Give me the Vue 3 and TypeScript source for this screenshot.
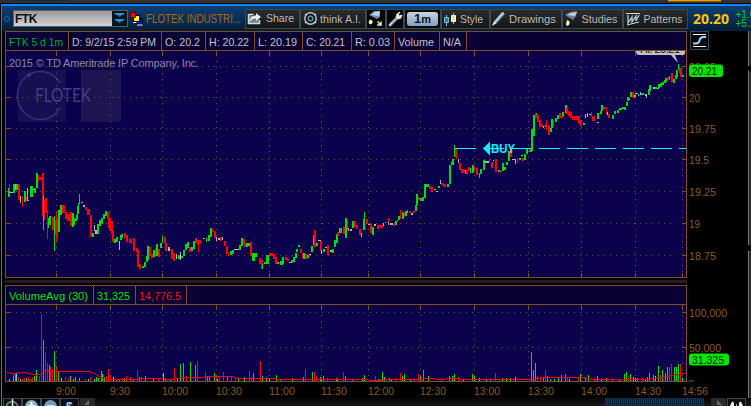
<script setup lang="ts">
interface Box { x: number; y: number; w: number; h: number; c: string }

const palette: Record<string, string> = { g: '#00dc00', r: '#ff0000', w: '#b4b4b4', c: '#22e6f0' }

// Each candle: colour, x, high, low, width
const candleData = `g8 188 197 2,r9 184 191 1,w10 192 193 3,g13 184 193 2,w15 184 190 1,g16 184 190 2,r18 184 200 2,w20 196 203 1,r22 196 207 1,g24 191 202 2,r26 197 201 1,w27 188 201 1,w28 200 201 1,g30 186 197 3,w33 189 190 1,g34 188 193 2,g36 173 188 2,r38 175 181 1,r39 177 180 3,
r42 173 216 2,g43 196 230 1,r44 200 220 1,r45 198 213 2,r47 210 239 1,g48 218 228 1,g49 216 225 2,r52 217 230 2,g54 216 251 1,r55 220 234 1,r56 211 242 1,r57 218 238 1,g58 210 232 2,g60 205 215 2,r62 205 213 3,r65 212 219 2,r67 214 221 3,r70 212 226 2,g72 213 227 2,g74 218 225 1,g75 219 221 1,g76 215 221 1,g77 206 219 1,g78 203 214 1,g79 194 204 1,w81 202 203 2,w83 205 207 2,r85 207 210 2,r87 209 215 3,r90 215 237 2,g92 233 237 2,w94 225 231 1,w95 230 234 2,g97 224 234 2,g99 220 226 2,g101 218 224 2,g103 214 219 2,g105 211 216 2,r107 212 219 2,r108 213 228 1,r109 218 231 2,r111 221 234 2,r112 230 242 2,g114 239 243 2,g116 237 242 2,w119 241 250 1,g120 235 240 2,g121 234 238 2,r124 233 238 2,r126 235 242 2,r129 239 243 2,r131 238 244 1,r133 238 251 2,r136 248 252 2,
r137 250 267 2,r139 264 269 2,g142 266 268 2,g144 262 267 2,g146 256 262 2,g147 246 260 2,r149 247 256 2,r151 254 258 2,g153 250 257 2,r155 248 256 1,g156 244 256 2,r158 249 257 2,g160 243 248 2,g162 236 243 1,r164 237 243 2,r165 243 251 2,w168 247 251 2,r171 249 259 2,r173 253 261 2,w176 254 259 1,g178 255 259 2,w180 252 260 1,g181 256 258 2,g183 250 256 2,g185 244 250 2,g187 242 248 2,r189 247 252 2,g191 247 251 2,g193 241 249 2,r195 238 243 2,r197 240 244 4,r198 242 252 1,w203 238 239 2,g206 238 242 1,g208 235 241 2,g210 228 237 2,r212 229 232 1,r214 231 238 2,w216 237 241 1,w218 238 240 2,r220 237 241 2,w222 237 240 1,r224 241 246 2,r226 246 254 2,r228 252 256 1,g230 251 255 2,g232 250 254 2,w234 249 250 5,g239 245 250 2,g241 238 246 2,r243 239 244 2,r244 243 247 2,g246 243 247 2,g248 243 246 2,
r250 242 256 2,g252 253 261 3,g255 253 257 2,r257 254 257 1,r259 258 264 2,r261 260 269 2,g262 264 269 1,g264 262 264 3,g266 255 264 3,r269 253 256 4,r273 254 259 2,r275 257 264 2,g277 262 264 2,g280 261 265 3,g282 257 264 2,r285 257 260 2,r287 259 261 2,w289 262 263 2,g291 260 263 2,g293 257 262 2,g295 253 258 2,g296 249 252 2,g298 245 247 2,r300 249 253 2,r302 253 258 2,g303 253 259 2,r305 254 259 2,g307 255 258 2,w309 254 255 2,g311 246 252 2,g313 235 245 2,r314 230 247 2,g316 243 246 2,w318 240 241 3,r320 241 251 2,w321 250 254 1,g323 249 252 2,w325 247 248 2,r327 245 255 2,w330 250 252 2,g332 249 253 2,g334 240 247 2,g336 234 243 2,r337 232 236 2,g339 228 233 3,r343 227 234 2,g345 218 238 2,r347 221 230 1,w348 228 231 1,w350 229 231 2,g352 221 228 2,r354 221 227 2,r356 225 229 2,r359 229 235 2,w361 233 237 1,g363 219 230 2,g364 212 224 1,r366 219 224 2,w368 224 225 3,r370 224 233 2,g372 227 235 2,w374 224 226 2,r377 225 229 2,r379 225 228 4,w383 223 226 1,w385 222 223 1,w388 218 225 1,r388 218 222 1,w390 223 225 3,r393 224 226 2,g395 221 225 2,w397 220 221 1,g398 216 220 2,r400 210 219 1,g402 212 219 2,r404 213 217 1,g405 211 216 2,g407 210 213 1,r409 211 213 2,w411 213 215 2,r413 211 213 2,g415 205 211 2,g416 194 205 2,r418 197 200 2,g420 198 201 2,g422 197 201 2,g424 184 198 2,g426 184 187 3,r429 186 189 2,r431 187 192 2,w434 189 190 2,w436 191 192 2,g438 186 188 2,w440 180 184 1,r441 183 185 2,r443 184 187 3,g447 184 187 2,g449 165 184 2,g451 162 165 1,
g452 159 165 2,g454 145 157 1,r455 149 157 2,r456 153 159 1,w458 159 163 1,r459 163 170 2,r461 169 173 4,g465 170 174 1,r466 170 174 2,r468 167 171 2,g470 168 173 1,g472 165 173 2,r474 167 171 1,r476 168 175 2,g479 173 178 1,g480 169 174 2,g483 160 170 2,w485 161 163 4,r489 159 162 1,r491 162 168 2,w493 160 161 1,r495 159 172 2,g498 170 172 2,r500 170 173 1,g502 163 171 2,g504 167 170 2,g506 162 165 2,g508 151 161 2,r510 148 157 2,w512 159 160 4,w515 160 164 1,r517 158 163 1,g519 158 160 2,w521 155 156 2,r522 158 161 2,g524 154 160 2,g526 149 154 2,r529 149 152 2,g530 150 152 2,g531 129 151 2,g533 115 136 2,r535 113 118 2,g536 113 115 1,r537 115 122 2,r539 120 127 2,r541 124 127 2,w543 126 128 1,g545 125 127 1,r546 120 130 1,r548 125 135 2,g550 128 132 2,g551 119 128 2,r553 120 126 1,g555 118 122 2,g557 115 119 2,r559 113 118 2,r561 116 118 2,g562 112 116 2,g565 105 113 2,r566 108 114 2,r568 111 116 2,r570 112 118 2,r572 116 120 6,r578 116 124 2,r580 120 126 2,g583 123 125 2,w585 114 118 1,w587 113 117 1,w589 114 115 2,r591 112 117 1,r592 116 121 3,w597 122 123 2,g597 113 119 2,g600 111 114 2,g601 105 111 2,r603 107 109 2,r606 107 114 1,w607 112 115 1,r608 114 118 2,g612 115 119 2,g614 111 114 2,g617 110 113 2,g619 108 110 3,g622 107 109 2,g624 107 110 2,
g626 102 106 2,g627 97 101 2,g629 98 100 1,g630 92 97 2,r632 92 98 2,w634 95 97 1,g635 93 97 1,w636 93 94 2,g638 94 96 1,w640 92 95 1,g641 93 95 3,w645 94 96 2,w646 94 98 1,g648 89 95 2,g649 85 91 2,r651 86 90 1,w653 87 89 2,g655 87 89 2,w657 88 89 2,g658 84 88 2,g660 83 87 2,g662 82 85 2,g664 80 83 2,g665 78 82 2,r667 77 80 2,g669 76 80 1,r671 73 82 2,g673 79 83 2,g675 75 79 2,g676 70 77 2,g678 64 70 1,r679 66 73 1,r680 68 77 2,g682 75 77 2`

// Each volume bar: colour, x, top
const volumeData = `c9 379,g13 375,g15 374,c16 373,r18 377,c20 379,r22 379,r24 378,g26 378,r28 377,r30 379,r32 377,g34 376,g36 370,r39 376,r41 314,g43 340,r45 352,r47 363,g49 365,r50 367,r52 369,g54 351,r56 366,g58 372,c61 378,r65 377,r68 378,g70 376,g73 379,g75 377,g79 378,r85 379,c88 379,r90 377,g94 379,g96 377,g98 378,g101 371,g102 374,g104 377,r106 376,r108 369,r110 375,c113 377,r116 379,g119 379,r122 378,g124 378,r126 376,r130 377,g133 379,r137 370,g139 377,r141 377,g145 376,g153 379,r158 378,c163 373,g165 378,g170 379,r174 368,g177 379,g180 364,g183 363,r186 376,g190 362,g195 365,r197 361,r205 372,g207 376,g209 377,g214 373,r216 376,c217 379,r219 377,r223 372,g227 377,r231 376,r235 378,g238 379,g244 377,r249 371,
r251 377,g253 373,r260 361,g262 376,g266 377,c269 378,g276 375,g280 379,g292 378,g303 377,r305 369,g312 372,r314 372,r316 376,g320 377,c321 379,g323 376,r327 378,g336 378,c337 379,r343 372,g345 376,g352 379,g362 378,g364 375,r375 376,g378 379,r380 379,g382 372,g384 377,g389 378,c391 379,r395 379,r400 373,g402 376,g404 374,g410 379,r414 379,r418 374,g420 376,g423 370,g428 376,r441 378,g449 376,g452 376,g454 374,r458 377,c463 379,g472 374,g474 376,c479 378,c486 380,g490 379,r495 373,r499 379,
g502 378,g506 378,g510 378,c515 377,g531 352,g533 370,g535 363,r537 376,r540 377,g543 378,r545 370,g547 376,g550 379,g554 379,g558 377,g561 375,g565 374,r567 377,c569 379,r578 378,g580 374,g585 378,g588 375,r594 379,g597 376,c601 379,g606 378,r612 379,g619 379,g624 374,g626 372,r628 376,g630 374,c633 377,c635 378,g637 378,r642 378,c645 379,g647 377,g649 373,g653 375,c655 376,g658 366,r660 375,g662 370,g665 373,g667 367,r669 367,r671 364,g674 367,g676 367,g678 364,r680 364,g682 378`

const rows = (s: string): string[] => s.split(',').map((t) => t.trim())

const candles: Box[] = rows(candleData).map((t) => {
  const [x, hi, lo, w] = t.slice(1).split(' ').map(Number)
  return { x, y: hi, w, h: lo - hi, c: palette[t[0]] }
})
const bars: Box[] = rows(volumeData).map((t) => {
  const [x, y] = t.slice(1).split(' ').map(Number)
  return { x, y, w: 1, h: 381 - y, c: palette[t[0]] }
})

const times: [number, string][] = [[56, '9:00'], [110, '9:30'], [162, '10:00'], [216, '10:30'], [269, '11:00'], [321, '11:30'], [368, '12:00'], [420, '12:30'], [474, '13:00'], [528, '13:30'], [581, '14:00'], [635, '14:30'], [682, '14:56']]
const prices: [number, string, number][] = [[66, '20.25', 27], [97, '20', 11], [128, '19.75', 27], [159, '19.5', 20], [191, '19.25', 27], [223, '19', 11], [255, '18.75', 27]]

const quote = [
  { t: 'FTK 5 d 1m', w: 63, tw: 54, c: 'sym' },
  { t: 'D: 9/2/15 2:59 PM', w: 93, tw: 84, c: '' },
  { t: 'O: 20.2', w: 44, tw: 35, c: '' },
  { t: 'H: 20.22', w: 49, tw: 40, c: '' },
  { t: 'L: 20.19', w: 48, tw: 39, c: '' },
  { t: 'C: 20.21', w: 49, tw: 39, c: '' },
  { t: 'R: 0.03', w: 43, tw: 35, c: '' },
  { t: 'Volume', w: 45, tw: 36, c: '' },
  { t: 'N/A', w: 27, tw: 18, c: '' },
]
const volumeCells = [
  { t: 'VolumeAvg (30)', w: 88, tw: 79, c: 'green' },
  { t: '31,325', w: 42, tw: 33, c: 'green' },
  { t: '14,776.5', w: 51, tw: 42, c: 'red' },
]
</script>

<template>
  <div class="window">
    <div class="strip"><i class="tab"></i><i class="gold"></i></div>
    <div class="frame">
      <header class="toolbar">
        <span class="ring"></span>
        <div class="symbol"><b>FTK</b>
          <svg width="15" height="15" viewBox="0 0 15 15"><path d="M2 2h11L7.500 6zM2 8h11L7.500 12z" fill="#2474b8" /><path d="M3 3h9M3 9h9" stroke="#4ba0df" /></svg>
        </div>
        <svg class="link" width="13" height="14" viewBox="0 0 13 14"><path d="M6.500 6.500h6v6h-6z" fill="#0000f0" stroke="#000" /><path d="M3.500 3.500h6v6h-6z" fill="#ff0" stroke="#000" /><path d="M.5.500h5v5h-5z" fill="#f00" stroke="#600" /><path d="M3 10.500h3.500M7 13h5.500" fill="none" stroke="#fff" /></svg>
        <span class="company"><svg width="98" height="16"><text x="1" y="12" textLength="95" lengthAdjust="spacingAndGlyphs">FLOTEK INDUSTRI...</text></svg></span>

        <div class="btn share">
          <svg width="15" height="13" viewBox="0 0 15 13"><path d="M1.500 2.500h5M1.500 2v9.500h11V8" fill="#738087" stroke="#c8dce8" stroke-width="1.500" /><path d="M2 10C3 5 6 3.500 9 3.500V1l5 4-5 4V6.500C6 6.300 4 8 2 10z" fill="#e5ede5" /></svg>
          <svg class="cap" width="30" height="15"><text x="1" y="11" textLength="28" lengthAdjust="spacingAndGlyphs">Share</text></svg>
        </div>
        <div class="btn think">
          <svg width="15" height="15" viewBox="0 0 15 15"><circle cx="7.500" cy="7.500" r="5.700" fill="#101820" stroke="#b7c6cc" stroke-width="1.500" /><circle cx="7.500" cy="7.500" r="2.500" fill="#0b2840" stroke="#9cc8e8" /><path d="M2 3l1.500 1M11.500 4l1.500-1M2 12l1.500-1M11.500 11l1.500 1" stroke="#d0dbd8" stroke-width="1.500" /></svg>
          <svg class="cap" width="44" height="15"><text x="1" y="12" textLength="41" lengthAdjust="spacingAndGlyphs">think A.I.</text></svg>
        </div>
        <div class="btn icon flask">
          <svg width="16" height="17" viewBox="0 0 16 17"><path d="M1 5L6 1l6 0 0 6-3 2z" fill="#6b91ae" /><path d="M3 5l4-3 5-1-1 5z" fill="#b8d6e6" /><path d="M2 10q3 0 2 3-2 2-3 0z" fill="#e9f1ce" stroke="#e9f1ce" /><path d="M9.500 11.500l3 3M13 11.500v3.500h-4" stroke="#dff0c0" stroke-width="1.500" fill="none" /></svg>
        </div>
        <div class="btn icon wrench">
          <svg width="15" height="16" viewBox="0 0 15 16"><path d="M2 14L9 7" stroke="#8eb7cc" stroke-width="3" stroke-linecap="round" /><path d="M12 1L9 3l-1 3 2 2 3-1 1-3-3 1-1-1z" fill="#e2e9cf" stroke="#e2e9cf" /><path d="M2 14l2-2" stroke="#eee" /></svg>
        </div>
        <div class="btn period"><span><b>1</b>m</span></div>
        <div class="btn style">
          <svg width="12" height="14" viewBox="0 0 12 14"><path d="M2.500 3v11M9.500 1v11" stroke="#a2bec9" /><path d="M.5 5.500h4v5h-4z" fill="#2e81a5" stroke="#6cb5cf" /><path d="M7.500 3.500h4v6h-4z" fill="#dce8b2" stroke="#f2f7d6" /></svg>
          <svg class="cap" width="26" height="15"><text x="1" y="12" textLength="23" lengthAdjust="spacingAndGlyphs">Style</text></svg>
        </div>
        <div class="btn draw">
          <svg width="14" height="15" viewBox="0 0 14 15"><path d="M2 10L10 1l3 2-8 9z" fill="#6395bd" /><path d="M3 10l8-9 1 1-8 9z" fill="#d7e9f2" /><path d="M2 10l3 2-5 3z" fill="#f1e8a8" /></svg>
          <svg class="cap" width="50" height="15"><text x="1" y="12" textLength="47" lengthAdjust="spacingAndGlyphs">Drawings</text></svg>
        </div>
        <div class="btn studies">
          <svg width="13" height="16" viewBox="0 0 13 16"><path d="M0 4L5 1l7-1-1 5-3 4z" fill="#63849b" /><path d="M2 4l4-2 6-1-2 4z" fill="#b8d0df" /><path d="M2 9q4 1 2 5-3 2-3-1z" fill="#eef3ca" /></svg>
          <svg class="cap" width="38" height="15"><text x="0.500" y="12" textLength="36" lengthAdjust="spacingAndGlyphs">Studies</text></svg>
        </div>
        <div class="btn patterns">
          <svg width="14" height="14" viewBox="0 0 14 14"><path d="M0 1.500h14M1 13l12-3" stroke="#dce0c0" /><path d="M2 3v8l4-6v5l4-6v5l3-6" fill="none" stroke="#a1c3d4" stroke-width="1.400" /></svg>
          <svg class="cap" width="41" height="15"><text x="0.500" y="12" textLength="39" lengthAdjust="spacingAndGlyphs">Patterns</text></svg>
        </div>
        <svg class="last" width="63" height="25" viewBox="688 6 63 25">
          <text class="big" x="693" y="24" textLength="36" lengthAdjust="spacingAndGlyphs">20.20</text>
          <text class="chg" x="735.500" y="17.500">+1.0</text><text class="chg" x="735.500" y="27">+5.2</text>
        </svg>
      </header>

      <main class="body">
        <section class="charts">
          <div class="cells">
            <div v-for="q in quote" :key="q.t" class="cell" :class="q.c" :style="{ width: q.w + 'px' }">
              <svg :width="q.tw + 4" height="18"><text x="2" y="13.500" :textLength="q.tw" lengthAdjust="spacingAndGlyphs">{{ q.t }}</text></svg>
            </div>
          </div>
          <svg class="plot" width="682" height="227" viewBox="5 51 682 227">
            <g class="watermark">
              <rect x="18" y="70" width="48" height="52" fill="#141052" /><rect x="81" y="70" width="40" height="52" fill="#1d1450" />
              <path d="M60 83A23 24 0 1 0 60 108" fill="none" stroke="#352f78" stroke-width="1.500" /><circle cx="29" cy="75" r="2" fill="#3c367f" />
              <text class="flotek" x="35" y="102" textLength="56" lengthAdjust="spacingAndGlyphs">FLOTEK</text>
              <text class="copy" x="9" y="67" textLength="190">2015 © TD Ameritrade IP Company, Inc.</text>
            </g>
            <g class="grid">
              <path v-for="p in prices" :key="p[0]" :d="`M16 ${p[0] + 0.5}H672`" />
              <path v-for="t in times" :key="t[0]" :d="`M${t[0] + 0.5} 61V272`" />
            </g>
            <g class="tick">
              <path v-for="p in prices" :key="p[0]" :d="`M5 ${p[0] + 0.5}h6M682 ${p[0] + 0.5}h4`" />
              <path v-for="t in times" :key="t[0]" :d="`M${t[0] + 0.5} 51v5M${t[0] + 0.5} 273v4`" />
            </g>
            <g class="crisp"><rect v-for="(b, i) in candles" :key="i" :x="b.x" :y="b.y" :width="b.w" :height="b.h" :fill="b.c" /></g>
            <path d="M455 148.500H686" stroke="#00f5ff" stroke-dasharray="21 7" />
            <path d="M483 148.500l7-7v14z" fill="#00f5ff" />
            <text class="buy" x="491" y="153" textLength="24" lengthAdjust="spacingAndGlyphs">BUY</text>
            <path d="M636 48h49v5q0 2-3 2h-7l3 8-7-8h-32q-3 0-3-4z" fill="#c0c0c0" />
            <text class="hi" x="640" y="53" textLength="40">Hi: 20.21</text>
            <path class="edge" d="M5.500 51v226.500H686.500V51" />
          </svg>
          <div class="splitter"></div>
          <div class="cells">
            <div v-for="q in volumeCells" :key="q.t" class="cell" :class="q.c" :style="{ width: q.w + 'px' }">
              <svg :width="q.tw + 4" height="18"><text x="2" y="13.500" :textLength="q.tw" lengthAdjust="spacingAndGlyphs">{{ q.t }}</text></svg>
            </div>
          </div>
          <svg class="plot" width="682" height="77" viewBox="5 305 682 77">
            <g class="grid">
              <path d="M16 312.500H672M16 347.500H672" />
              <path v-for="t in times" :key="t[0]" :d="`M${t[0] + 0.5} 315V380`" />
            </g>
            <g class="tick">
              <path d="M5 312.500h6M5 347.500h6M682 312.500h4M682 347.500h4" />
              <path v-for="t in times" :key="t[0]" :d="`M${t[0] + 0.5} 305v5`" />
            </g>
            <path class="edge" d="M5.500 305v76.500H686.500V305" />
            <g class="crisp"><rect v-for="(b, i) in bars" :key="i" :x="b.x" :y="b.y" :width="b.w" :height="b.h" :fill="b.c" /></g>
            <path class="avg" d="M7 372.500L12 373.500L24 372.500L34 374.500L41 374.500L44 370.500L52 371.500H89L95 373.500L99 376.500L105 378.500L113 379.500H137L141 378.500H162L166 379.500H172L176 378.500L186 377.500H203L206 376.500H232L238 378.500H276L278 379.500H368L370 380.500H382L386 379.500H420L424 378.500H435L438 379.500H444L448 378.500H458L461 379.500H530L536 378.500L545 377.500H584L592 379.500H617L620 380.500L624 379.500H648L653 378.500L665 377.500L671 375.500L678 374.500L680 373.500H685" />
          </svg>
          <svg width="682" height="16" viewBox="5 382 682 16" class="overflow">
            <text v-for="t in times" :key="t[0]" class="axis" :x="t[0]" y="395" :textLength="t[1].length === 4 ? 20 : 26" lengthAdjust="spacingAndGlyphs">{{ t[1] }}</text>
          </svg>
        </section>
        <svg class="scale" width="61" height="367" viewBox="687 31 61 367">
          <rect x="690.500" y="31.500" width="18" height="18" fill="#03070c" stroke="#35475c" /><path d="M693 34.500h13M693 46.500h13" stroke="#f4f4cf" /><path d="M693 43.500h3q3 0 3.500-3t3.500-3.500h3" fill="none" stroke="#9bd6f6" stroke-width="1.800" />
          <text v-for="p in prices" :key="p[0]" class="axis" x="689" :y="p[0] + 5" :textLength="p[2]" lengthAdjust="spacingAndGlyphs">{{ p[1] }}</text>
          <rect x="689" y="64.500" width="34" height="12.500" rx="3" fill="#00e400" /><text class="tag" x="692" y="75" textLength="25" lengthAdjust="spacingAndGlyphs">20.21</text>
          <text class="axis" x="689" y="317" textLength="38" lengthAdjust="spacingAndGlyphs">100,000</text>
          <text class="axis" x="689" y="352" textLength="32" lengthAdjust="spacingAndGlyphs">50,000</text>
          <svg x="687" y="370" width="61" height="12" viewBox="687 370 61 12"><text class="axis" x="688" y="388">0</text></svg>
          <rect x="689" y="353.500" width="40" height="12" rx="3" fill="#00e400" /><text class="tag" x="692" y="364" textLength="32" lengthAdjust="spacingAndGlyphs">31,325</text>
        </svg>
        <svg class="rail" width="3" height="367" viewBox="748 31 3 367"><path d="M748 31h3v367h-3z" fill="#292929" /><path d="M748.500 31v367" stroke="#777" /><path d="M748 66h3v6l-3-2zM748 245l3 1v5h-3z" fill="#000" /></svg>
      </main>

      <footer class="bottom">
        <div class="tool"><svg width="17" height="8" viewBox="0 0 17 8"><circle cx="8" cy="8.500" r="6" fill="#14222e" stroke="#6d8698" stroke-width="1.500" /><path d="M8.500 0v8" stroke="#e5e5cf" stroke-width="1.500" /></svg></div>
        <div class="tool"><svg width="17" height="8" viewBox="0 0 17 8"><circle cx="8.500" cy="7.500" r="6.500" fill="#89afc5" /><path d="M8.500 3v5M5 7h7" stroke="#fff" stroke-width="2" /></svg></div>
        <div class="tool"><svg width="17" height="8" viewBox="0 0 17 8"><circle cx="8.500" cy="7.500" r="6.500" fill="#789bb0" /><path d="M5 7h7" stroke="#dce5e9" stroke-width="2" /></svg></div>
        <div class="tool"><svg width="17" height="8" viewBox="0 0 17 8"><text class="dollar" x="5" y="11.500">$</text></svg></div>
        <div class="arrow left"><svg width="15" height="7" viewBox="0 0 15 7"><path d="M9 2v5H4z" fill="#686868" /></svg></div>
        <div class="track"><div class="thumb"></div></div>
        <div class="arrow"><svg width="15" height="7" viewBox="0 0 15 7"><path d="M6 2v5h5z" fill="#686868" /></svg></div>
        <div class="tool end"><svg width="17" height="8" viewBox="0 0 17 8"><path d="M2.500 8l2.500-5M5 8V4M14.500 8l-2.500-5M12 8V4" stroke="#f0f0da" stroke-width="2" /><path d="M8.500 5v2" stroke="#78b8df" /></svg></div>
      </footer>
    </div>
  </div>
</template>

<style>
body { margin: 0; background: #000; overflow: hidden; }
</style>

<style scoped>
.window { width: 751px; height: 406px; background: #000; overflow: hidden; font: 11px "Liberation Sans", sans-serif; color: #bdbdc4; }
.window svg { display: block; flex: none; }
.strip { height: 3px; background: #303030; border-bottom: 1px solid #050505; display: flex; overflow: hidden; }
.tab { width: 57px; height: 1px; margin-left: 12px; background: #07304f; }
.gold { width: 53px; height: 1px; margin-left: 599px; border-bottom: 1px solid #865712; background: #dca800; }
.frame { height: 402px; box-sizing: border-box; border-top: 2px solid #0a84ff; border-left: 1px solid #0a84ff; margin-left: 1px; display: flex; flex-direction: column; }
.toolbar { height: 25px; display: flex; align-items: center; background: linear-gradient(#103e70, #082e56 50%, #021d38); flex: none; padding-left: 2px; }
.ring { width: 4px; height: 4px; border: 1px solid #1369b8; border-radius: 50%; flex: none; }
.symbol { width: 113px; height: 15px; margin-left: 3px; border: 1px solid #56606a; background: linear-gradient(#9a9a9a, #d2d2d2); display: flex; justify-content: space-between; color: #111; flex: none; line-height: 16px; }
.symbol b { padding-left: 1px; font-size: 12px; letter-spacing: -.5px; }
.symbol svg { background: #071420; }
.link { margin-left: 2px; }
.company { width: 98px; margin-left: 2px; fill: #a56d18; font-size: 12px; flex: none; }
.btn { box-sizing: border-box; height: 20px; border: 1px solid #3b4855; background: linear-gradient(#2c2c2c, #151515); display: flex; align-items: center; flex: none; gap: 3px; padding-left: 1px; }
.cap { fill: #b9b9b9; font-size: 11.5px; }
.share { width: 55px; margin-left: 2px; }
.think { width: 66px; }
.think svg:first-child { margin-left: 1px; }
.think { gap: 1px; }
.icon { background: #030303; padding-left: 1px; }
.flask { width: 20px; }
.wrench { width: 18px; }
.period { width: 37px; background: #080c10; padding-left: 2px; }
.period span { width: 31px; height: 14px; border-radius: 3px; background: linear-gradient(#c3d5e4, #86a0b8); color: #10151b; text-align: center; font: bold 11px/14px "Liberation Sans", sans-serif; }
.period b { font-size: 13px; }
.style { width: 49px; padding-left: 2px; }
.draw { width: 72px; padding-left: 1px; gap: 2px; }
.studies { width: 61px; padding-left: 2px; }
.patterns { width: 65px; padding-left: 2px; }
.big { font: bold 15px "Open Sans", sans-serif; fill: #ffc800; }
.chg { font-size: 10px; fill: #00cc20; }
.body { display: flex; height: 367px; flex: none; padding-left: 3px; }
.charts { width: 682px; flex: none; }
.cells { box-sizing: border-box; height: 20px; border: 1px solid #80501a; background: #090033; display: flex; }
.cell { box-sizing: border-box; border-right: 1px solid #80501a; fill: #c2c2cc; font-size: 11.5px; padding-left: 1px; flex: none; }
.sym { fill: #00aa35; }
.green { fill: #00e400; }
.red { fill: #ff1010; }
.plot { background: #0b004c; }
.grid path { fill: none; stroke: #80501a; stroke-dasharray: 1 5; shape-rendering: crispEdges; }
.tick path, .edge { fill: none; stroke: #80501a; shape-rendering: crispEdges; }
.crisp { shape-rendering: crispEdges; }
.flotek { font: 20px Lato, sans-serif; fill: #443e85; }
.copy { font-size: 11px; fill: #8c86b2; }
.buy { font: bold 12.5px "Liberation Sans", sans-serif; fill: #00f5ff; }
.hi { font-size: 11px; fill: #111; }
.avg { fill: none; stroke: #f00; stroke-width: 1; }
.axis { fill: #8a5a22; font-size: 11.5px; }
.tag { fill: #042b04; font-size: 11.5px; }
.overflow { overflow: visible; }
.splitter { height: 3px; border-top: 2px solid #000; border-bottom: 2px solid #000; background: repeating-conic-gradient(#383838 0 25%, #080808 0 50%) 0 0 / 2px 2px; }
.bottom { display: flex; height: 8px; padding-left: 1px; background: linear-gradient(#050505, #191919); }
.tool { box-sizing: border-box; width: 19px; height: 8px; border: 1px solid #3d4857; border-bottom: 0; background: #090d12; flex: none; overflow: hidden; }
.dollar { font: bold 12px "Liberation Sans", sans-serif; fill: #a9d2e8; }
.arrow { width: 15px; height: 8px; background: #292929; flex: none; }
.left { margin-left: 1px; }
.track { width: 616px; display: flex; }
.thumb { width: 99px; height: 8px; margin-left: 510px; background: repeating-linear-gradient(90deg, #173653 0 1px, #0b1f34 1px 2px); }
.end { margin-left: 1px; }
</style>
